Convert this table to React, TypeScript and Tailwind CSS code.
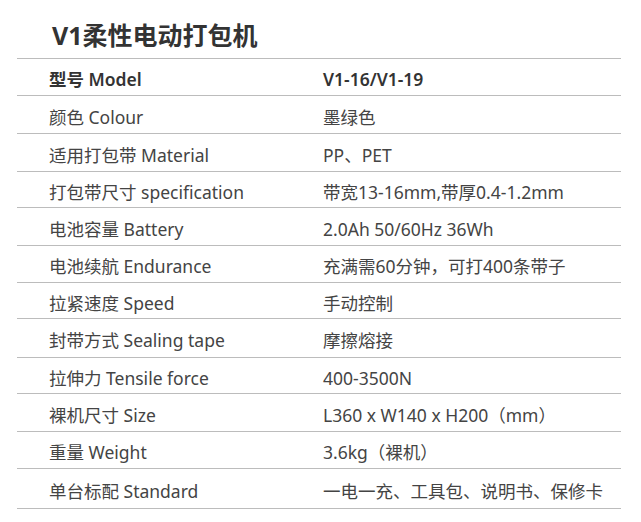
import React from "react";

const rows: { h: string; k: string; v: string; bold?: boolean }[] = [
  { h: "h-[37px]", k: "型号 Model", v: "V1-16/V1-19", bold: true },
  { h: "h-[38px]", k: "颜色 Colour", v: "墨绿色" },
  { h: "h-[38px]", k: "适用打包带 Material", v: "PP、PET" },
  { h: "h-[36px]", k: "打包带尺寸 specification", v: "带宽13-16mm,带厚0.4-1.2mm" },
  { h: "h-[38px]", k: "电池容量 Battery", v: "2.0Ah 50/60Hz 36Wh" },
  { h: "h-[37px]", k: "电池续航 Endurance", v: "充满需60分钟，可打400条带子" },
  { h: "h-[36px]", k: "拉紧速度 Speed", v: "手动控制" },
  { h: "h-[39px]", k: "封带方式 Sealing tape", v: "摩擦熔接" },
  { h: "h-[36px]", k: "拉伸力 Tensile force", v: "400-3500N" },
  { h: "h-[38px]", k: "裸机尺寸 Size", v: "L360 x W140 x H200（mm）" },
  { h: "h-[37px]", k: "重量 Weight", v: "3.6kg（裸机）" },
  { h: "h-[40px]", k: "单台标配 Standard", v: "一电一充、工具包、说明书、保修卡" },
];

export default function App() {
  return (
    <div
      className="w-[641px] h-[522px] bg-white overflow-hidden"
      style={{ fontFamily: "'Noto Sans', 'Noto Sans CJK SC', sans-serif" }}
    >
      <div className="pl-[17px] w-[621px]">
        <div className="h-[58px] pl-[35px] pt-[19px] text-[25px] leading-[32px] font-bold text-[#333]">
          V1柔性电动打包机
        </div>
        <div className="border-b border-[#bcbcbc]">
          {rows.map((r, i) => (
            <div
              key={i}
              className={`${r.h} flex items-center pt-[5px] border-t border-[#bcbcbc] text-[17.5px] ${
                r.bold ? "font-semibold text-[#333]" : "text-[#444]"
              }`}
            >
              <div className="w-[306px] pl-[32px] whitespace-nowrap">{r.k}</div>
              <div className="whitespace-nowrap">{r.v}</div>
            </div>
          ))}
        </div>
      </div>
    </div>
  );
}
